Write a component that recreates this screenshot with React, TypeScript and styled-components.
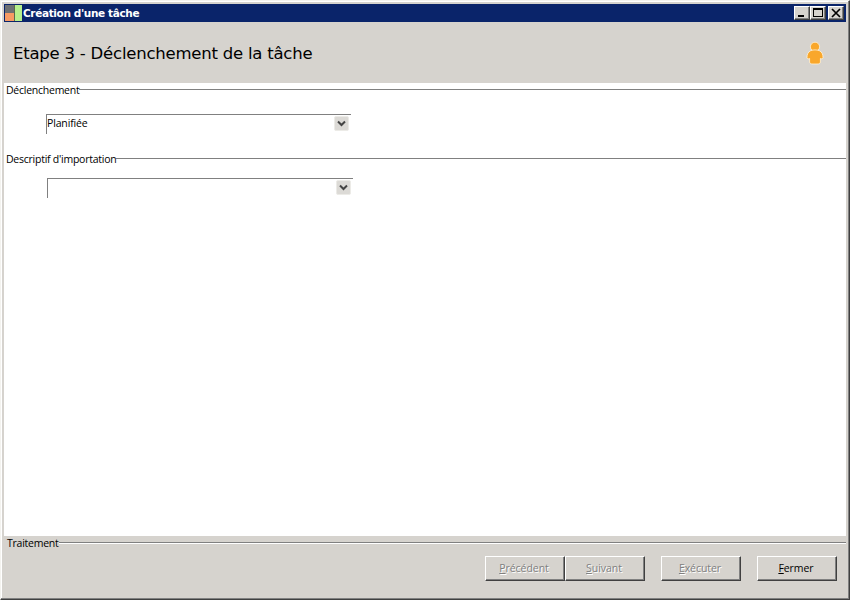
import React from "react";
import styled, { createGlobalStyle } from "styled-components";

const Global = createGlobalStyle`
  html, body { margin: 0; padding: 0; background: #d6d3ce; }
  body { font-family: "Noto Sans", "DejaVu Sans", sans-serif; font-size: 10.5px; color: #000; }
`;

const Win = styled.div`
  box-sizing: border-box;
  width: 850px;
  height: 600px;
  display: flex;
  flex-direction: column;
  padding: 3px;
  background: #d6d3ce;
  border-style: solid;
  border-width: 1px;
  border-color: #f4f3ef #404040 #404040 #f4f3ef;
  box-shadow: inset -1px -1px 0 #808080, inset 1px 1px 0 #ffffff;
`;

const TitleBar = styled.div`
  height: 18px;
  flex: none;
  display: flex;
  align-items: center;
  background: #0a246a;
  color: #fff;
  padding: 0 2px 0 1px;
`;

const TitleIcon = styled.svg`
  width: 17px;
  height: 18px;
  flex: none;
  margin-right: 1px;
`;

const TitleText = styled.span`
  font-family: "DejaVu Sans", sans-serif;
  font-weight: 700;
  font-size: 10.5px;
  letter-spacing: -0.36px;
  flex: 1;
`;

const CaptionButton = styled.button<{ $gap?: number }>`
  box-sizing: border-box;
  width: 16px;
  height: 14px;
  padding: 0;
  margin-left: ${(p) => p.$gap ?? 0}px;
  background: #d6d3ce;
  border-style: solid;
  border-width: 1px;
  border-color: #fff #404040 #404040 #fff;
  box-shadow: inset -1px -1px 0 #808080;
  display: flex;
  align-items: center;
  justify-content: center;
`;

const CaptionGlyph = styled.svg`
  width: 14px;
  height: 12px;
  display: block;
`;

const Header = styled.div`
  height: 61px;
  flex: none;
  display: flex;
  align-items: center;
  justify-content: space-between;
  padding: 0 22px 0 9px;
  background: #d6d3ce;
`;

const Heading = styled.h1`
  margin: 1px 0 0;
  font-family: "DejaVu Sans", sans-serif;
  font-weight: 400;
  font-size: 16.5px;
  letter-spacing: -0.22px;
  color: #000;
`;

const PersonIcon = styled.svg`
  width: 18px;
  height: 24px;
  display: block;
`;

const Body = styled.div`
  flex: 1;
  min-height: 0;
  background: #fff;
  display: flex;
  flex-direction: column;
  padding-top: 1px;
`;

const GroupRow = styled.div<{ $top?: number; $left?: number }>`
  display: flex;
  align-items: center;
  height: 12px;
  margin-top: ${(p) => p.$top ?? 0}px;
  padding-left: ${(p) => p.$left ?? 2}px;
`;

const GroupLabel = styled.span`
  font-family: "Open Sans", "Noto Sans", sans-serif;
  font-size: 10.5px;
  line-height: 12px;
  letter-spacing: -0.25px;
  white-space: nowrap;
`;

const GroupLine = styled.div`
  flex: 1;
  height: 1px;
  margin-top: -2px;
  background: #808080;
`;

const Combo = styled.div<{ $left: number; $width: number; $top: number }>`
  box-sizing: border-box;
  margin-left: ${(p) => p.$left}px;
  margin-top: ${(p) => p.$top}px;
  width: ${(p) => p.$width}px;
  height: 20px;
  border-top: 1px solid #808080;
  border-left: 1px solid #808080;
  display: flex;
  justify-content: space-between;
  padding: 1px 2px 0 0;
`;

const ComboValue = styled.span`
  font-family: "Open Sans", "Noto Sans", sans-serif;
  font-size: 10.5px;
  line-height: 14px;
  letter-spacing: -0.15px;
`;

const ComboArrow = styled.span`
  box-sizing: border-box;
  width: 15px;
  height: 15px;
  border: 1px solid #ecebe7;
  border-radius: 2px;
  background: #dcdad6;
  display: flex;
  align-items: center;
  justify-content: center;
`;

const Chevron = styled.svg`
  width: 9px;
  height: 7px;
  display: block;
`;

const Footer = styled.div`
  height: 60px;
  flex: none;
  display: flex;
  flex-direction: column;
`;

const FooterLine = styled.div`
  flex: 1;
  height: 1px;
  margin-top: -2px;
  background: #808080;
  box-shadow: 0 1px 0 #fff;
`;

const ButtonBar = styled.div`
  display: flex;
  justify-content: flex-end;
  padding: 7px 9px 0 0;
`;

const ActionButton = styled.button<{ $gap?: number }>`
  box-sizing: border-box;
  width: 80px;
  height: 25px;
  padding: 0 2px 2px 0;
  margin-left: ${(p) => p.$gap ?? 0}px;
  background: #d6d3ce;
  border-style: solid;
  border-width: 1px;
  border-color: #fff #404040 #404040 #fff;
  box-shadow: inset -1px -1px 0 #808080;
  font-family: "Open Sans", "Noto Sans", sans-serif;
  font-size: 10.5px;
  letter-spacing: -0.05px;
  color: ${(p) => (p.disabled ? "#808080" : "#000")};
  text-shadow: ${(p) => (p.disabled ? "1px 1px 0 #fff" : "none")};
  & u { text-underline-offset: 1px; }
`;

export default function App() {
  return (
    <>
      <Global />
      <Win>
        <TitleBar>
          <TitleIcon viewBox="0 0 17 18">
            <rect x="0" y="1" width="10" height="8" fill="#6e7072" />
            <rect x="0" y="9" width="10" height="8" fill="#f79a63" />
            <rect x="10" y="1" width="7" height="16" fill="#b6f08c" />
            <rect x="9" y="1" width="1" height="16" fill="#5a6a4a" />
          </TitleIcon>
          <TitleText>Création d'une tâche</TitleText>
          <CaptionButton aria-label="Réduire">
            <CaptionGlyph viewBox="0 0 14 12">
              <rect x="3" y="8" width="6" height="2" fill="#000" />
            </CaptionGlyph>
          </CaptionButton>
          <CaptionButton aria-label="Agrandir">
            <CaptionGlyph viewBox="0 0 14 12">
              <rect x="2.5" y="1.5" width="9" height="8" fill="none" stroke="#000" />
              <rect x="2" y="1" width="10" height="2" fill="#000" />
            </CaptionGlyph>
          </CaptionButton>
          <CaptionButton $gap={2} aria-label="Fermer">
            <CaptionGlyph viewBox="0 0 14 12">
              <path d="M3 2 L11 10 M11 2 L3 10" stroke="#000" strokeWidth="1.7" />
            </CaptionGlyph>
          </CaptionButton>
        </TitleBar>
        <Header>
          <Heading>Etape 3 - Déclenchement de la tâche</Heading>
          <PersonIcon viewBox="0 0 18 24">
            <circle cx="9" cy="5.8" r="4.6" fill="#f9a72b" stroke="#fff3d8" strokeWidth="0.8" />
            <path
              d="M4.5 9.8 C6.5 8.6 11.5 8.6 13.5 9.8 C16 11 17 13.5 17 16.5 C17 18 15.2 18.2 14.4 17.4 L14.4 21 C14.4 22.6 13 23 11 23 L7 23 C5 23 3.6 22.6 3.6 21 L3.6 17.4 C2.8 18.2 1 18 1 16.5 C1 13.5 2 11 4.5 9.8 Z"
              fill="#f9a72b"
              stroke="#fff3d8"
              strokeWidth="0.8"
            />
          </PersonIcon>
        </Header>
        <Body>
          <GroupRow>
            <GroupLabel>Déclenchement</GroupLabel>
            <GroupLine />
          </GroupRow>
          <Combo $left={42} $width={305} $top={18}>
            <ComboValue>Planifiée</ComboValue>
            <ComboArrow>
              <Chevron viewBox="0 0 9 7">
                <path d="M1 1.5 L4.5 5 L8 1.5" fill="none" stroke="#444" strokeWidth="2" />
              </Chevron>
            </ComboArrow>
          </Combo>
          <GroupRow $top={19}>
            <GroupLabel>Descriptif d'importation</GroupLabel>
            <GroupLine />
          </GroupRow>
          <Combo $left={43} $width={306} $top={13}>
            <ComboValue />
            <ComboArrow>
              <Chevron viewBox="0 0 9 7">
                <path d="M1 1.5 L4.5 5 L8 1.5" fill="none" stroke="#444" strokeWidth="2" />
              </Chevron>
            </ComboArrow>
          </Combo>
        </Body>
        <Footer>
          <GroupRow $top={1} $left={3}>
            <GroupLabel>Traitement</GroupLabel>
            <FooterLine />
          </GroupRow>
          <ButtonBar>
            <ActionButton disabled><u>P</u>récédent</ActionButton>
            <ActionButton disabled><u>S</u>uivant</ActionButton>
            <ActionButton disabled $gap={16}><u>E</u>xécuter</ActionButton>
            <ActionButton $gap={16}><u>F</u>ermer</ActionButton>
          </ButtonBar>
        </Footer>
      </Win>
    </>
  );
}
